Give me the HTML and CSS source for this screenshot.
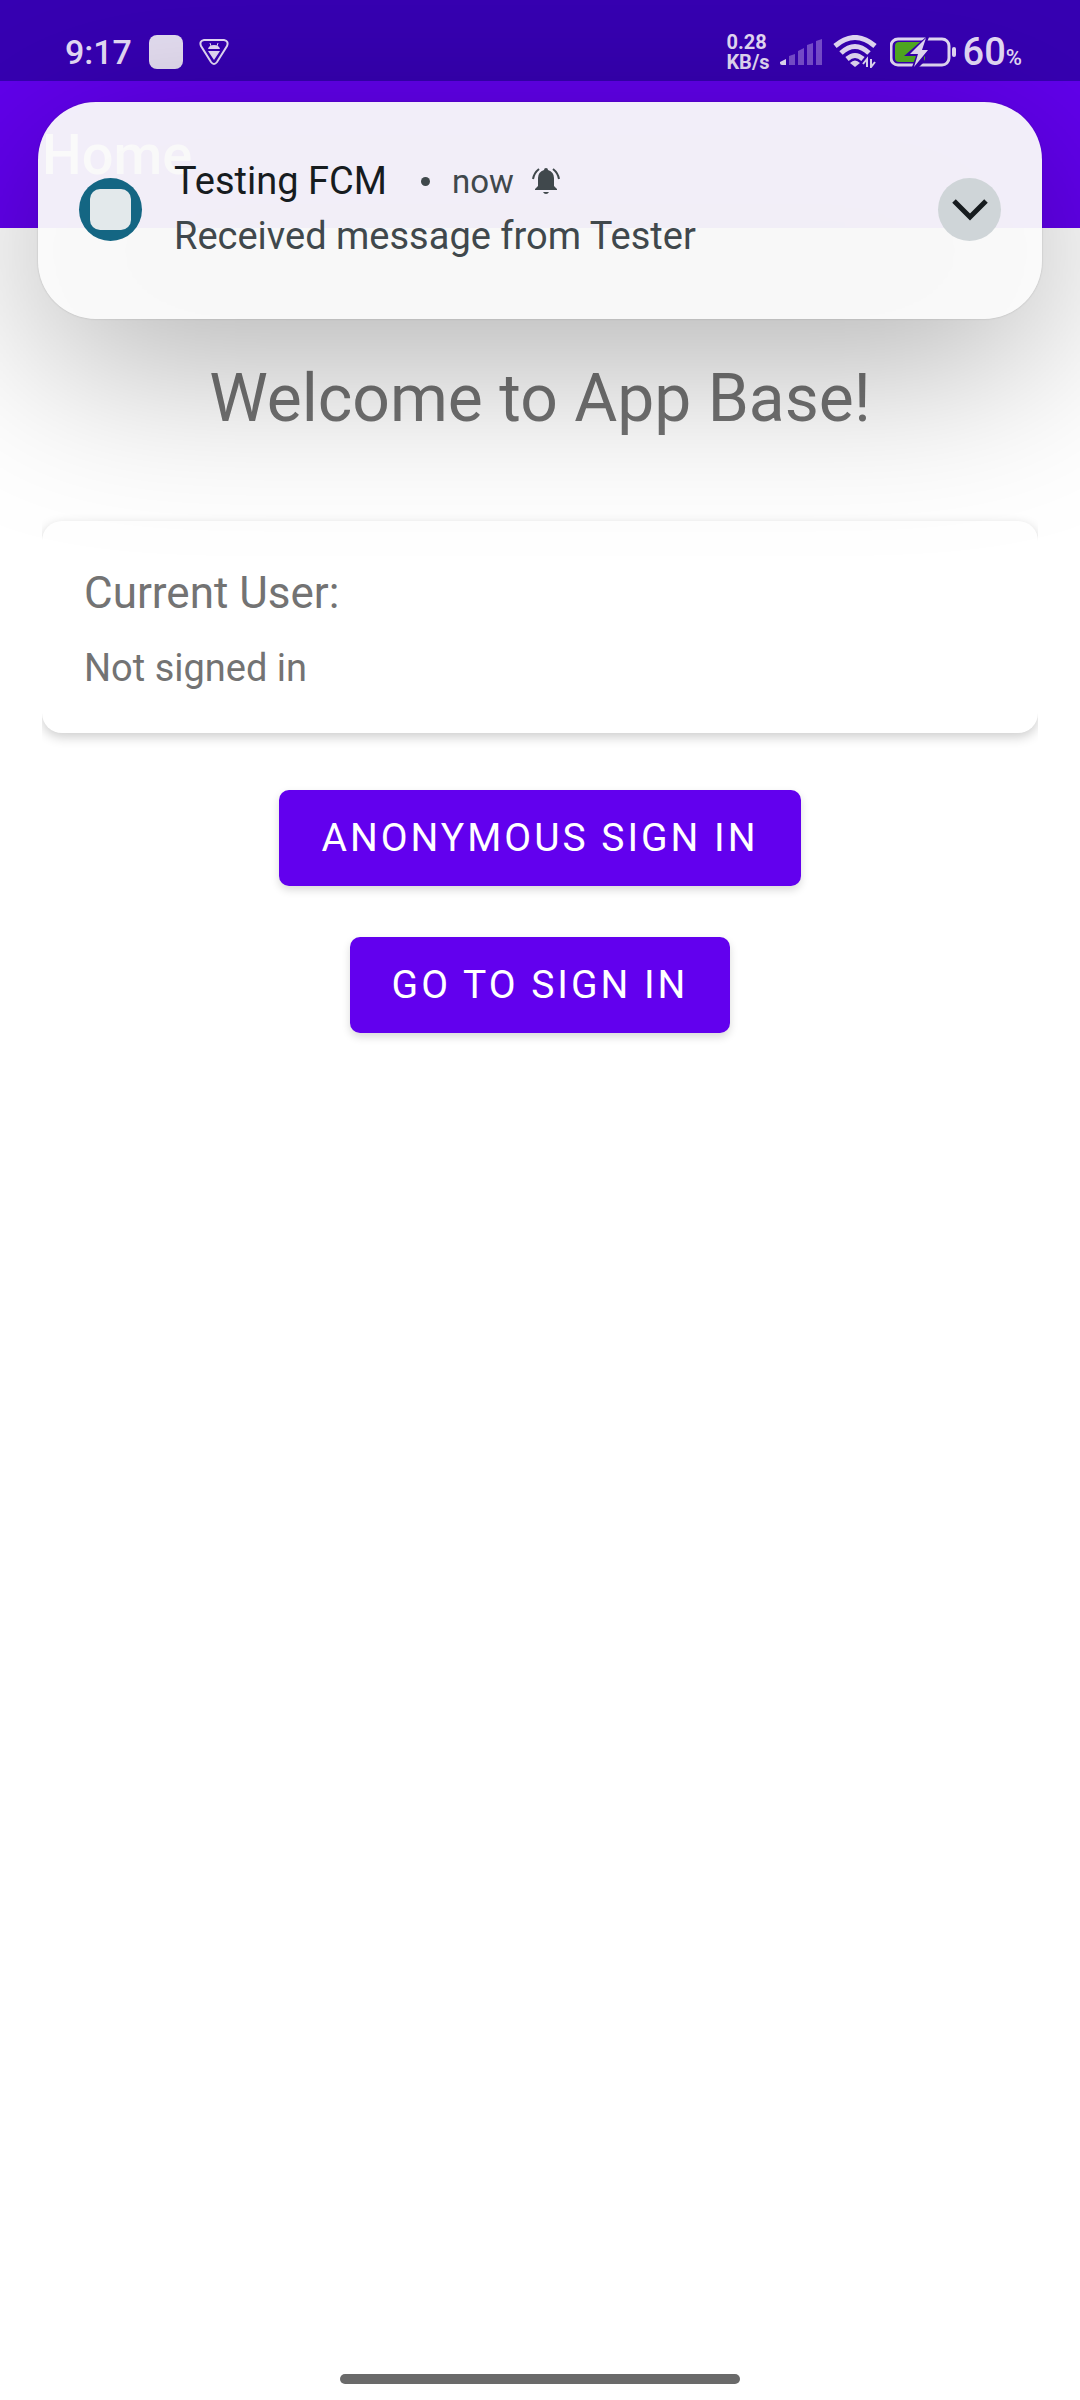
FILE: index.html
```html
<!DOCTYPE html>
<html lang="en">
<head>
<meta charset="utf-8">
<title>Home</title>
<link rel="stylesheet" href="styles.css">
</head>
<body>
<div class="status-bar">
  <span class="clock">9:17</span>
  <span class="app-dot"></span>
  <svg class="shield" viewBox="0 0 30 28" width="30" height="28" aria-hidden="true">
    <path d="M5 2H25Q30 3 28 8L18 24Q15 28 12 24L2 8Q0 3 5 2Z" fill="none" stroke="#e6dcf8" stroke-width="2"/>
    <path d="M9 11Q10 7 15 7T21 11ZM9 13H21L15 22Z" fill="#e6dcf8"/>
    <path d="M11 5L12 8M19 5L18 8" stroke="#e6dcf8"/>
  </svg>
  <span class="net-speed">0.28<br>KB/s</span>
  <svg class="signal" viewBox="0 0 42 26" width="42" height="26" aria-hidden="true">
    <path d="M0 23L6 20V26H2Q0 26 0 24Z" fill="#e6dcf8"/>
    <path d="M9 17L15 15V26H9ZM18 12L24 9V26H18ZM27 6L33 4V26H27ZM36 2L42 0V26H36Z" fill="#7a4fd0"/>
  </svg>
  <svg class="wifi" viewBox="0 0 44 33" width="44" height="33" aria-hidden="true">
    <path d="M2 11Q22 -6 42 11M8 18Q22 5 36 18M14 24Q22 17 30 24" fill="none" stroke="#e6dcf8" stroke-width="5"/>
    <path d="M17 28Q22 23 27 28L22 32Z" fill="#e6dcf8"/>
    <path d="M34 32V24L30 29M38 24V32L42 27" fill="none" stroke="#e6dcf8" stroke-width="2"/>
  </svg>
  <svg class="battery" viewBox="0 0 66 30" width="66" height="30" aria-hidden="true">
    <rect x="1" y="2" width="58" height="26" rx="7" fill="none" stroke="#e6dcf8" stroke-width="3"/>
    <rect x="5" y="5" width="30" height="20" rx="4" fill="#52ad22"/>
    <path d="M36 0L14 19H26L22 30H29L34 25V20L42 11H35L39 0Z" fill="#3700ae"/>
    <path d="M36 1L20 17H28L24 30L38 13H32Z" fill="#e6dcf8"/>
    <rect x="62" y="10" width="4" height="10" rx="2" fill="#e6dcf8"/>
  </svg>
  <span class="level">60<small>%</small></span>
</div>
<header class="app-bar"><h1>Home</h1></header>
<main>
  <h2>Welcome to App Base!</h2>
  <div class="card-clip">
    <section class="card">
      <h3>Current User:</h3>
      <p>Not signed in</p>
    </section>
  </div>
  <button class="action" type="button">ANONYMOUS SIGN IN</button>
  <button class="action" type="button">GO TO SIGN IN</button>
</main>
<div class="gesture-pill"></div>
<div class="heads-up">
  <aside class="notification" role="alert">
    <span class="app-icon"></span>
    <div class="message">
      <div class="message-head">
        <strong>Testing FCM</strong>
        <span class="separator"></span>
        <span class="time">now</span>
        <svg class="bell" viewBox="0 0 28 28" width="28" height="28" aria-hidden="true">
          <path d="M14 1Q16 1 16 3Q22 5 22 11V19L25 22V23H3V22L6 19V11Q6 5 12 3Q12 1 14 1ZM11 25H17Q16 27 14 27T11 25Z" fill="#40484c"/>
          <path d="M7 2Q2 6 1 12M21 2Q26 6 27 12" fill="none" stroke="#40484c" stroke-width="2"/>
        </svg>
      </div>
      <p>Received message from Tester</p>
    </div>
    <button class="expand" type="button" aria-label="Expand">
      <svg viewBox="0 0 36 22" width="36" height="22" aria-hidden="true"><path d="M2 2L18 18L34 2" fill="none" stroke="#171c1f" stroke-width="5"/></svg>
    </button>
  </aside>
</div>
</body>
</html>
```

FILE: styles.css
```css
* { box-sizing: border-box; }
body {
  margin: 0;
  min-height: 100vh;
  display: flex;
  flex-direction: column;
  position: relative;
  overflow-x: hidden;
  background: #fff;
  color: #737373;
  font-family: Roboto, "Liberation Sans", sans-serif;
}
h1, h2, h3, p { margin: 0; font-weight: 400; }
svg { display: block; flex: none; }

.status-bar {
  height: 81px;
  padding: 22px 58px 0 65px;
  display: flex;
  align-items: center;
  background: #3700b3;
  color: #e6dcf8;
}
.clock { font-size: 34px; font-weight: 500; }
.app-dot { width: 34px; height: 34px; margin-left: 17px; border-radius: 8px; background: #e6dff3; }
.shield { margin-left: 16px; }
.net-speed { margin-left: auto; font-size: 20px; line-height: 20px; font-weight: 700; }
.signal { margin-left: 10px; }
.wifi { margin-left: 11px; }
.battery { margin-left: 13px; }
.level { margin-left: 7px; font-size: 38px; font-weight: 500; }
.level small { font-size: 22px; }

.app-bar {
  height: 147px;
  padding: 0 42px;
  display: flex;
  align-items: center;
  background: #6200ee;
  color: #fff;
}
.app-bar h1 { font-size: 56px; font-weight: 500; }

main {
  padding: 133px 42px 0;
  display: flex;
  flex-direction: column;
  align-items: center;
}
main h2 { font-size: 66px; line-height: 76px; }
.card-clip { align-self: stretch; margin-top: 64px; padding: 20px 0; overflow: hidden; }
.card {
  padding: 44px 42px 38px;
  border-radius: 20px;
  background: #fff;
  box-shadow: 0 4px 12px rgba(0, 0, 0, .2);
}
.card h3 { font-size: 44px; line-height: 56px; }
.card p { margin-top: 20px; font-size: 38px; line-height: 54px; }
.action {
  height: 96px;
  margin-top: 37px;
  padding: 0 42px;
  border: 0;
  border-radius: 10px;
  background: #6200ee;
  box-shadow: 0 4px 8px rgba(0, 0, 0, .15);
  color: #fff;
  font: 400 39px Roboto, sans-serif;
  letter-spacing: 3px;
}
.action + .action { margin-top: 51px; }

.gesture-pill {
  width: 37%;
  height: 10px;
  margin: auto auto 16px;
  border-radius: 5px;
  background: #6a6a6a;
}

.heads-up { position: absolute; top: 102px; left: 38px; right: 38px; }
/* soft shade cast on the page behind the notification */
.heads-up::before {
  content: "";
  position: absolute;
  inset: 40px 0 -40px;
  border-radius: 58px;
  background: rgba(0, 0, 0, .32);
  filter: blur(90px);
}
.notification {
  position: relative;
  padding: 51px 41px 53px;
  display: flex;
  align-items: center;
  border-radius: 58px;
  background: rgba(251, 251, 251, .95);
  box-shadow: 0 0 2px rgba(0, 0, 0, .2);
  color: #40484c;
}
.app-icon {
  width: 63px;
  height: 63px;
  flex: none;
  display: grid;
  place-items: center;
  border-radius: 50%;
  background: #146683;
}
.app-icon::before { content: ""; width: 41px; height: 41px; border-radius: 10px; background: #e3e9eb; }
.message { flex: 1; margin-left: 32px; padding-bottom: 3px; }
.message-head { display: flex; align-items: center; }
.message-head strong { color: #171c1f; font-size: 38px; line-height: 56px; font-weight: 400; }
.separator { width: 9px; height: 9px; margin: 0 22px 0 34px; border-radius: 50%; background: #40484c; }
.time { font-size: 33px; }
.bell { margin-left: 18px; }
.message p { font-size: 38px; line-height: 54px; }
.expand {
  width: 63px;
  height: 63px;
  padding: 0;
  display: grid;
  place-items: center;
  border: 0;
  border-radius: 50%;
  background: #cfd5d8;
}
```
